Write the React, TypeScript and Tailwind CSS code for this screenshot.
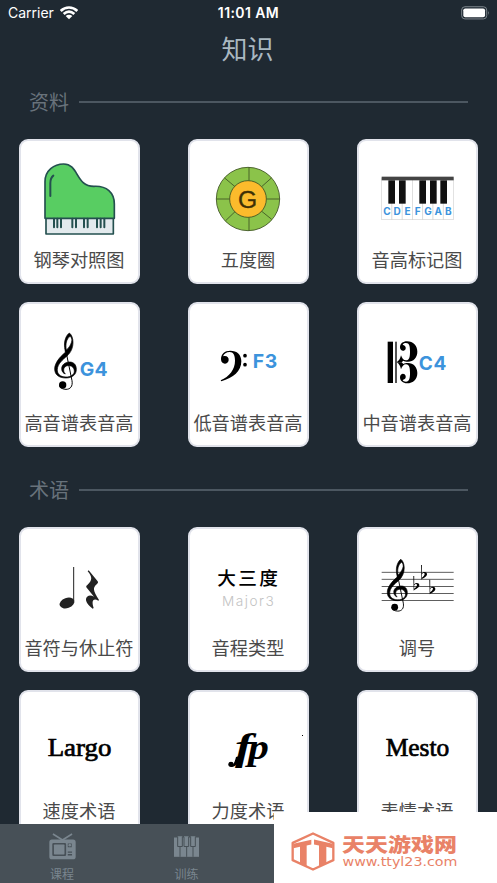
import type { ReactNode } from "react";

const ui = "font-['Inter','Noto_Sans_CJK_SC',sans-serif]";
const cjk = "font-['Noto_Sans_CJK_SC',sans-serif]";

function TrebleClef({ transform }: { transform?: string }) {
  return (
    <g transform={transform}>
      <path
        fillRule="evenodd"
        stroke="#000"
        strokeWidth="2"
        d="M178 114C169 120 161 138 164 158C165 166 166 170 166 172C148 187 134 205 134 222C134 240 148 249 168 249C188 249 199 238 199 223C199 208 190 201 179 201C165 201 155 210 155 221C155 230 160 235 166 237C161 232 160 226 162 220C165 213 172 211 179 212C187 213 193 219 193 228C193 239 183 246 168 246C150 246 141 236 142 223C143 207 157 195 171 183C183 172 189 158 189 142C189 130 185 119 178 114ZM180 124C186 128 187 136 184 143C181 152 175 160 169 165C166 148 169 132 180 124Z"
      />
      <path d="M166 160L186 257C189 275 180 283 168 283C158 283 149 278 149 270" fill="none" stroke="#000" strokeWidth="3" />
      <circle cx="158" cy="270" r="11" />
    </g>
  );
}

function Flat({ x, y }: { x: number; y: number }) {
  return (
    <g transform={`translate(${x} ${y})`}>
      <path d="M0 0H2.6V25C8 19 18 20 18 28C18 35 9 38 1 44ZM2.6 28V38C8 34 11 30 11 26C10 23 5 24 2.6 28Z" fillRule="evenodd" />
    </g>
  );
}

const noteText = "fill-[#3c93dc] font-['Inter',sans-serif] font-bold";

function GrandPiano() {
  return (
    <g stroke="#24504f" strokeWidth="5" strokeLinejoin="round">
      <rect x="108" y="262" width="202" height="50" fill="#e3eaed" />
      <path d="M105 265V155C105 122 132 102 161 102C207 102 196 169 252 169C290 167 313 188 313 222V265Z" fill="#58cd62" />
      <path d="M130 137C122 143 121 149 121 160V198" fill="none" strokeWidth="6" strokeLinecap="round" />
      <path d="M132 266V292M142 266V292M153 266V292M187 266V292M198 266V292M222 266V292M233 266V292M261 266V292M272 266V292M283 266V292" strokeWidth="6" strokeLinecap="round" />
    </g>
  );
}

function FifthsWheel() {
  return (
    <g>
      <g stroke="#3f5423" strokeWidth="2.6">
        <circle cx="204" cy="207" r="95" fill="#8bc34a" />
        <path d="M207 112V152M207 262V302M109 207H149M259 207H299M134 144L165 170M274 144L245 170M137 272L166 244M275 268L244 243" />
        <circle cx="204" cy="207" r="55" fill="#fbbb2c" />
      </g>
      <text x="203" y="233" textAnchor="middle" className="fill-[#3d3006] font-['Liberation_Sans',sans-serif] text-[74px] stroke-[#3d3006] stroke-[1px]">G</text>
    </g>
  );
}

function NamedKeys() {
  return (
    <g>
      <g fill="#fff" stroke="#d4d4d4" strokeWidth="2">
        {[0, 1, 2, 3, 4, 5, 6].map((i) => (
          <rect key={i} x={95 + i * 30.8} y="144" width="30.8" height="125" />
        ))}
      </g>
      <rect x="95" y="140" width="216" height="11" fill="#444" />
      {[115, 147, 208, 240, 271].map((x) => (
        <rect key={x} x={x} y="151" width="20" height="70" fill="#111" />
      ))}
      {["C", "D", "E", "F", "G", "A", "B"].map((n, i) => (
        <text key={n} x={111 + i * 30.7} y="256" textAnchor="middle" className={`${noteText} text-[30px]`}>{n}</text>
      ))}
    </g>
  );
}

function TreblePitch() {
  return (
    <g>
      <TrebleClef />
      <text x="209" y="242" textLength="84" className={`${noteText} text-[58px]`}>G4</text>
    </g>
  );
}

function BassPitch() {
  return (
    <g>
      <path d="M123 193C123 177 134 167 151 167C171 167 184 179 184 199C184 228 160 249 124 259L122 256C148 244 165 224 165 197C165 181 160 171 149 171C139 171 132 176 129 184C140 181 147 187 146 196C144 210 123 210 123 193Z" />
      <circle cx="195" cy="182" r="5.5" />
      <circle cx="195" cy="209" r="5.5" />
      <text x="218" y="218" textLength="74" className={`${noteText} text-[58px]`}>F3</text>
    </g>
  );
}

function AltoPitch() {
  const half =
    "M140 202C148 197 151 190 153 181C156 190 161 196 168 196C178 196 180 185 180 170C180 154 178 144 168 144C163 144 159 146 158 149C166 151 168 156 167 161C164 171 150 169 150 157C150 146 159 139 171 139C190 139 202 152 202 170C202 188 190 200 174 200C168 200 163 199 160 197L155 202Z";
  return (
    <g>
      <rect x="113" y="140" width="16" height="124" />
      <rect x="136" y="140" width="4" height="124" />
      <path d={half} />
      <path d={half} transform="matrix(1 0 0 -1 0 404)" />
      <text x="206" y="226" textLength="83" className={`${noteText} text-[57px]`}>C4</text>
    </g>
  );
}

function NoteAndRest() {
  return (
    <g fill="#222">
      <rect x="189.500" y="141" width="3" height="103" />
      <ellipse cx="171" cy="249" rx="23" ry="15" transform="rotate(-20 171 249)" />
      <path d="M236 151L263 184C265 187 264 190 261 192C248 203 248 210 267 240L265 242C251 234 243 240 251 264L248 266C234 255 227 245 228 237C230 226 241 223 252 230L229 202C228 199 229 197 232 195C247 181 248 172 233 154Z" />
    </g>
  );
}

function IntervalSample() {
  return (
    <g>
      <text x="112" y="196" textLength="182" className="fill-black font-['Noto_Sans_CJK_SC',sans-serif] text-[56px] font-medium">大三度</text>
      <text x="126" y="258" textLength="155" className="fill-[#c3c3c3] font-['Inter',sans-serif] text-[41px] font-light">Major3</text>
    </g>
  );
}

function KeySignature() {
  return (
    <g>
      <path d="M95 157H311M95 178H311M95 199.500H311M95 220.500H311M95 241.500H311" stroke="#222" strokeWidth="2.2" />
      <TrebleClef transform="translate(-12.1 13) scale(.925 .92)" />
      <Flat x={190} y={168} />
      <Flat x={213} y={135} />
      <Flat x={238} y={179} />
    </g>
  );
}

function Word({ x, width, children }: { x: number; width: number; children: string }) {
  return (
    <text x={x} y="214" textLength={width} lengthAdjust="spacingAndGlyphs" className="fill-black stroke-black stroke-[2px] font-['Liberation_Serif',serif] text-[73px]">
      {children}
    </text>
  );
}

function Fortepiano() {
  return (
    <g>
      <text transform="translate(705 224) scale(1.38 1)" className="fill-black font-['Liberation_Serif',serif] text-[112px] font-bold italic">f</text>
      <text transform="translate(744 223) scale(1.18 1)" className="fill-black font-['Liberation_Serif',serif] text-[106px] font-bold italic">p</text>
      <circle cx="693" cy="238" r="8" />
      <path d="M693 246C708 246 716 233 722 212L708 216C704 232 700 240 693 243Z" />
      <rect x="906" y="150" width="3" height="3" />
    </g>
  );
}

type Item = { label: string; view: string; art: ReactNode };

const materials: Item[] = [
  { label: "钢琴对照图", view: "27 27 363 300", art: <GrandPiano /> },
  { label: "五度圈", view: "24 27 363 300", art: <FifthsWheel /> },
  { label: "音高标记图", view: "21 27 363 300", art: <NamedKeys /> },
  { label: "高音谱表音高", view: "27 21 363 300", art: <TreblePitch /> },
  { label: "低音谱表音高", view: "24 21 363 300", art: <BassPitch /> },
  { label: "中音谱表音高", view: "21 21 363 300", art: <AltoPitch /> },
];

const terms: Item[] = [
  { label: "音符与休止符", view: "27 21 363 300", art: <NoteAndRest /> },
  { label: "音程类型", view: "24 21 363 300", art: <IntervalSample /> },
  { label: "调号", view: "21 21 363 300", art: <KeySignature /> },
  { label: "速度术语", view: "57 15 363 300", art: <Word x={143} width={191}>Largo</Word> },
  { label: "力度术语", view: "564 15 363 300", art: <Fortepiano /> },
  { label: "表情术语", view: "330 15 363 300", art: <Word x={416} width={191}>Mesto</Word> },
];

function Section({ title, items }: { title: string; items: Item[] }) {
  return (
    <section>
      <div className="flex h-[30px] items-center gap-[10px] pr-[29px] pl-[29px]">
        <h2 className={`${cjk} text-[20px] leading-[30px] text-[#68727b]`}>{title}</h2>
        <div className="h-[2px] flex-1 bg-[#4c5761]" />
      </div>
      <div className="mt-[22px] grid grid-cols-[repeat(3,121px)] gap-x-[48px] gap-y-[18px] pl-[19px]">
        {items.map((item) => (
          <div key={item.label} className="flex h-[145px] flex-col items-center overflow-hidden rounded-[9px] border-2 border-[#e1e3eb] bg-white">
            <svg viewBox={item.view} className="-mx-[2px] -mt-[2px] block h-[100px] w-[121px] shrink-0">{item.art}</svg>
            <span className={`${cjk} mt-[6px] mr-px whitespace-nowrap text-[18.200px] leading-[28px] text-[#4a4a4a]`}>{item.label}</span>
          </div>
        ))}
      </div>
    </section>
  );
}

function StatusBar() {
  return (
    <div className={`${ui} grid h-[26px] grid-cols-3 items-center text-[14px] leading-[18px] text-white`}>
      <div className="flex items-center gap-[6px] pl-[8px]">
        <span>Carrier</span>
        <svg viewBox="0 0 54 42" className="h-[14px] w-[18px]" fill="none" stroke="#fff" strokeWidth="8">
          <path d="M2 15C16 1 38 1 52 15M11 24C21 15 33 15 43 24" />
          <path d="M27 40L17 30C23 25 31 25 37 30Z" fill="#fff" stroke="none" />
        </svg>
      </div>
      <span className="text-center text-[14px] font-semibold tracking-[0.4px]">11:01 AM</span>
      <svg viewBox="0 0 88 42" className="mr-[7px] h-[14px] w-[29px] justify-self-end">
        <rect x="2" y="2" width="76" height="37" rx="10" fill="none" stroke="#7e878d" strokeWidth="3" />
        <rect x="7" y="7" width="66" height="27" rx="6" fill="#fff" />
        <path d="M82 15Q87 20 82 27Z" fill="#7e878d" />
      </svg>
    </div>
  );
}

function TabBar() {
  return (
    <nav className={`${cjk} flex h-[59px] bg-[#475057] text-[12px] leading-[18px] text-[#7a868f]`}>
      <div className="flex w-[124px] flex-col items-center pt-[9px]">
        <svg viewBox="0 0 82 82" className="h-[27px] w-[27px]" fill="#7a868f">
          <path d="M12 3L41 21L70 3" fill="none" stroke="#7a868f" strokeWidth="5" />
          <path fillRule="evenodd" d="M9 20H73Q81 20 81 28V72Q81 80 73 80H9Q1 80 1 72V28Q1 20 9 20ZM14 30Q10 30 10 34V66Q10 70 14 70H48Q52 70 52 66V34Q52 30 48 30ZM57 32H69V43H57ZM57 56V60H70V56ZM57 64V68H70V64Z" />
          <rect x="15" y="35" width="32" height="30" rx="2" />
          <circle cx="63" cy="37" r="4" />
        </svg>
        <span className="mt-[5px]">课程</span>
      </div>
      <div className="flex w-[125px] flex-col items-center pt-[12px]">
        <svg viewBox="0 0 75 62" className="h-[21px] w-[25px]">
          <path d="M0 4H75V62H0Z" fill="#7a868f" />
          <path d="M11 0H25V31H11ZM30 0H44V31H30ZM50 0H64V31H50Z" fill="#7a868f" />
          <path d="M18 31V62M38 31V62M57 31V62M11 2V31H25V2M30 2V31H44V2M50 2V31H64V2" fill="none" stroke="#475057" strokeWidth="3" />
        </svg>
        <span className="mt-[8px]">训练</span>
      </div>
    </nav>
  );
}

function SiteBadge() {
  return (
    <div className="absolute right-0 bottom-0 flex h-[71px] w-[223px] bg-white pl-[17px]">
      <svg viewBox="0 0 132 116" className="mt-[20px] h-[39px] w-[44px] shrink-0" fill="#e98267">
        <path d="M66 4L127 32V84L66 112L5 84V32Z" fill="none" stroke="#e98267" strokeWidth="7" strokeLinejoin="round" />
        <path d="M7 35L61 23V37L47 40V104L27 94V44L7 48Z" />
        <path d="M69 22L125 35V48L106 44V93L84 104V40L69 37Z" />
      </svg>
      <svg viewBox="0 0 118 71" className="ml-[6px] h-[71px] w-[118px]" fill="#e98267">
        <text x="1" y="39.500" textLength="115" lengthAdjust="spacingAndGlyphs" className="font-['Noto_Sans_CJK_SC',sans-serif] text-[19px] font-black">天天游戏网</text>
        <text x="1.500" y="54" textLength="115" lengthAdjust="spacingAndGlyphs" className="font-['DejaVu_Sans',sans-serif] text-[12px]">www.ttyl23.com</text>
      </svg>
    </div>
  );
}

export default function App() {
  return (
    <div className="relative flex h-[883px] w-[497px] flex-col overflow-hidden bg-[#1f2932]">
      <main className="h-[824px] overflow-hidden">
        <StatusBar />
        <h1 className={`${cjk} h-[61px] pt-[3px] pr-[2px] text-center text-[26px] leading-[38px] text-[#aab8c1]`}>知识</h1>
        <Section title="资料" items={materials} />
        <div className="h-[28px]" />
        <Section title="术语" items={terms} />
      </main>
      <TabBar />
      <SiteBadge />
    </div>
  );
}
